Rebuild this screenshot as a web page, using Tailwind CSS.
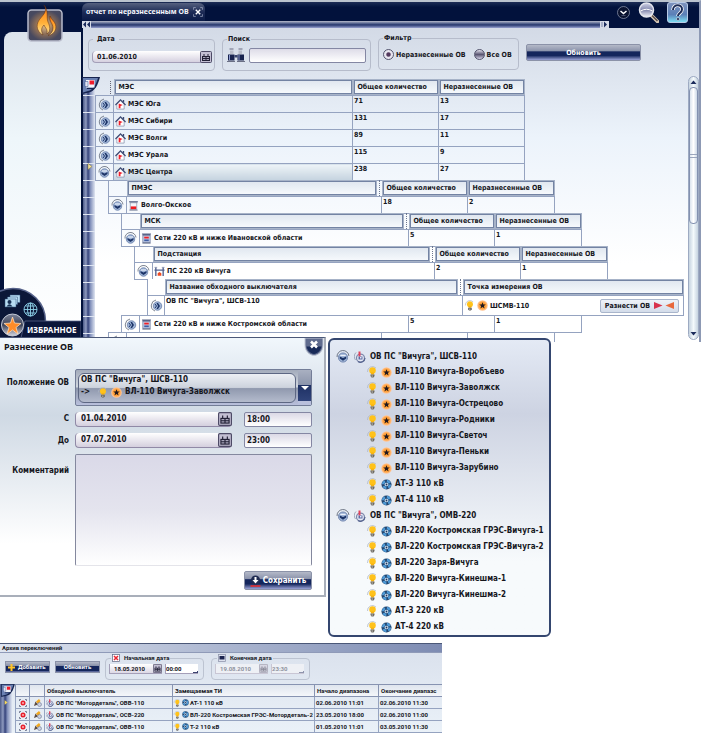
<!DOCTYPE html>
<html lang="ru">
<head>
<meta charset="utf-8">
<meta name="viewport" content="width=device-width, initial-scale=1">
<title>Отчет по неразнесенным ОВ</title>
<script src="https://cdn.jsdelivr.net/npm/@tailwindcss/browser@4"></script>
</head>
<body class="bg-white font-['DejaVu_Sans_Condensed','Noto_Sans',sans-serif] font-bold text-[8px] leading-[10px] text-[#15161c]">

<svg class="absolute size-0" aria-hidden="true">
  <defs>
    <linearGradient id="gFlame" x1="0" y1="0" x2="0" y2="1"><stop offset="0" stop-color="#ff7a10"/><stop offset=".6" stop-color="#ffb13a"/><stop offset="1" stop-color="#ffe9a0"/></linearGradient>
    <radialGradient id="gTile"><stop offset="0" stop-color="#e8c48c"/><stop offset=".55" stop-color="#8d6e57"/><stop offset="1" stop-color="#47495f"/></radialGradient>
    <radialGradient id="gOrange"><stop offset="0" stop-color="#ff9a1c"/><stop offset=".6" stop-color="#ffa13c"/><stop offset="1" stop-color="#ffc9a0"/></radialGradient>
    <linearGradient id="gBall" x1="0" y1="0" x2="0" y2="1"><stop offset="0" stop-color="#7d8398"/><stop offset=".5" stop-color="#3b4157"/><stop offset="1" stop-color="#d5d8e2"/></linearGradient>
    <linearGradient id="gHelp" x1="0" y1="0" x2="0" y2="1"><stop offset="0" stop-color="#7f93bd"/><stop offset=".6" stop-color="#5b80b8"/><stop offset="1" stop-color="#7fe4f6"/></linearGradient>
    <linearGradient id="gLens" x1="0" y1="0" x2="0" y2="1"><stop offset="0" stop-color="#cfd2e6"/><stop offset=".5" stop-color="#8287ad"/><stop offset="1" stop-color="#f3f4fb"/></linearGradient>
  </defs>
  <symbol id="open" viewBox="0 0 26 26"><path d="M2 13A11 11 0 0 1 24 11" fill="none" stroke="#5c6475" stroke-width="1.6"/><circle cx="13" cy="14" r="8.5" fill="#9fb4d6" stroke="#6279a5" stroke-width="1.5"/><path d="M7 12l6 3 6-3v4l-6 4-6-4z" fill="#1c3468"/><path d="M8 10h10" stroke="#f2f6fd" stroke-width="2"/></symbol>
  <symbol id="shut" viewBox="0 0 26 26"><path d="M12 2A11.5 11.5 0 0 0 10 24" fill="none" stroke="#5c6475" stroke-width="1.6"/><circle cx="15" cy="14" r="8.5" fill="#9fb4d6" stroke="#6279a5" stroke-width="1.5"/><path d="M13 8h3l4 6-4 6h-3l3-6z" fill="#1c3468"/><path d="M10 10l3 4-3 4" fill="none" stroke="#1c3468" stroke-width="2"/></symbol>
  <symbol id="house" viewBox="0 0 24 24"><path d="M4 11v11h16V11l-8-7z" fill="#fff" stroke="#7f8aa8" stroke-width="1.5"/><path d="M1 13L12 2l11 11" fill="none" stroke="#3c4a73" stroke-width="2.6"/><path d="M17 2h3v6l-3-3z" fill="#3c4a73"/><path d="M8 10l9 3-5 2v5H8z" fill="#f0202c"/></symbol>
  <symbol id="pmes" viewBox="0 0 24 24"><path d="M2 2h20l-2 5H4z" fill="#77809c"/><path d="M5 6h14v15H5z" fill="#f4f5fa" stroke="#8b93ab" stroke-width="1.5"/><path d="M6 14h12v6H6z" fill="#f01c20"/><path d="M3 22h18" stroke="#6f7893" stroke-width="2"/></symbol>
  <symbol id="msk" viewBox="0 0 24 24"><path d="M2 1h20l-2 5H4z" fill="#5a6488"/><path d="M4 5h16v16H4z" fill="#c8d2ea" stroke="#5e6b92" stroke-width="1.5"/><path d="M7 8h10v4H7z" fill="#ee2028"/><path d="M7 14h10v4H7z" fill="#3e5ea6"/><path d="M3 22h18" stroke="#5e6883" stroke-width="2"/></symbol>
  <symbol id="sub" viewBox="0 0 24 24"><path d="M4 2v20M20 2v20M1 9h22" fill="none" stroke="#52618f" stroke-width="3"/><path d="M8 21v-5l4-3 4 3v5z" fill="#f04a20"/><path d="M1 3h6M17 3h6" stroke="#9aa3bb" stroke-width="2"/></symbol>
  <symbol id="bulb" viewBox="0 0 24 24"><path d="M3 12A10 10 0 0 1 20 4" fill="none" stroke="#aeb6c4" stroke-width="1.5"/><circle cx="13" cy="9" r="6.5" fill="#ffc21a"/><path d="M10 13h6v4h-6z" fill="#f7b212"/><path d="M9 17h8v3l-2 3h-4l-2-3z" fill="#6d6a63"/><path d="M11 20h3" stroke="#e8e8e8" stroke-width="1.4"/></symbol>
  <symbol id="star" viewBox="0 0 24 24"><circle cx="12" cy="12" r="11.500" fill="url(#gOrange)"/><path d="M12 5l2 5h5l-4 3.200 1.600 5.300L12 15.300 7.400 18.500 9 13.200 5 10h5z" fill="#201820"/></symbol>
  <symbol id="at" viewBox="0 0 24 24"><circle cx="12" cy="12" r="11" fill="#23466f"/><circle cx="12" cy="12" r="7.500" fill="none" stroke="#4f9ad6" stroke-width="5.500" stroke-dasharray="7.500 4.280"/><circle cx="12" cy="12" r="4" fill="#dfeaf6"/><circle cx="12" cy="12" r="2" fill="#173560"/></symbol>
  <symbol id="breaker" viewBox="0 0 24 24"><path d="M4 3a11 11 0 0 0-1 15" fill="none" stroke="#8a91a8" stroke-width="1.500"/><circle cx="13" cy="14" r="8" fill="#e7ebf6" stroke="#7f89ab" stroke-width="2.500"/><path d="M8 21a9 9 0 0 0 14-7" stroke="#56648f" stroke-width="2.500" fill="none"/><path d="M9 1h4v10H9z" fill="#e2405a"/><path d="M9 11h8v6H9z" fill="#5c6ba4"/><path d="M12 12h3v3h-3z" fill="#e7ebf6"/></symbol>
  <symbol id="cal" viewBox="0 0 24 24"><rect x="1" y="1" width="22" height="22" rx="2" fill="#c3bfd3" stroke="#4d4a66" stroke-width="2"/><path d="M4 10h16v10H4z" fill="#222036"/><path d="M8 6v5M16 6v5" stroke="#222036" stroke-width="2"/><path d="M6 12h5v2H6zM13 12h5v2h-5zM6 16h5v2H6zM13 16h5v2h-5z" fill="#a9a6bc"/></symbol>
  <symbol id="corner" viewBox="0 0 36 34"><path d="M0 0h36C32 16 26 28 14 31L0 34z" fill="#16244f"/><path d="M2 2h30C28 16 22 26 12 28L2 31z" fill="#6a80b2"/><path d="M8 6h17v15H8z" fill="#f4f5fb"/><path d="M15 7h9v8h-9z" fill="#ee1c2c"/><path d="M6 9h6v10H6z" fill="#dfe4f4" stroke="#39508f"/><path d="M10 23h12" stroke="#16244f" stroke-width="2"/></symbol>
</svg>

<!-- Report window -->
<section class="relative flex h-[342px] flex-col overflow-hidden border-r-2 border-t-2 border-[#8d99b4] border-t-[#bac3ce] bg-[#02123c] text-[7px]" aria-label="Отчет">
  <header class="flex h-[26px] shrink-0 items-start bg-linear-to-b from-[#1c2c55] via-[#02123c] via-20% to-[#02123c]">
    <div class="min-w-0 flex-1 pl-[82px] pt-px">
      <div class="flex h-[18px] w-[123px] items-center gap-1 rounded-t-md bg-linear-to-b from-[#56617f] via-[#1d2b56] to-[#0a1a46] pl-1 text-[#f4f6fb]">
        <span class="font-['Noto_Sans',sans-serif] whitespace-nowrap">отчет по неразнесенным ОВ</span>
        <button aria-label="Закрыть вкладку" class="size-[10px] shrink-0"><svg class="size-[10px]" viewBox="0 0 18 18" fill="none" stroke="#fff"><path d="M5 5l8 8M13 5l-8 8" stroke-width="2.500"/><path d="M1 5V1h4M13 1h4v4M17 13v4h-4M5 17H1v-4" stroke="#c3cbe0"/></svg></button>
      </div>
      <div class="flex h-[7px] items-stretch justify-between bg-linear-to-b from-[#b9bccb] via-[#26366c] via-55% to-[#9aa2cf]">
        <button aria-label="Назад" class="w-[9px] bg-[#d5dae6]"><svg class="h-[7px] w-[9px]" viewBox="0 0 18 14"><path d="M8 1v12L2 7zM16 1v12l-6-6z" fill="#1a2a5c"/></svg></button>
        <button aria-label="Вперед" class="w-[9px] bg-[#d5dae6]"><svg class="h-[7px] w-[9px]" viewBox="0 0 18 14"><path d="M8 1v12l6-6z" fill="#1a2a5c"/><path d="M4 2v10" stroke="#7a86ab" stroke-width="2"/></svg></button>
      </div>
    </div>
    <div class="flex shrink-0 items-center gap-2 pl-2 pr-[11px]">
      <button aria-label="Меню" class="size-[13px]"><svg class="size-[13px]" viewBox="0 0 26 26"><circle cx="13" cy="13" r="12" fill="#0a1330" stroke="#8f97ae" stroke-width="1.500"/><path d="M7 10l6 5 6-5" fill="none" stroke="#fff" stroke-width="3"/><path d="M9 19h8" stroke="#59637f" stroke-width="1.500"/></svg></button>
      <button aria-label="Найти" class="size-[21px]"><svg class="size-[21px]" viewBox="0 0 42 42"><path d="M26 26l13 13" stroke="#d8c9b6" stroke-width="7" stroke-linecap="round"/><path d="M28 27l11 11" stroke="#574c4a" stroke-width="3"/><circle cx="17" cy="16" r="14" fill="url(#gLens)" stroke="#e4e6ef" stroke-width="3"/><path d="M5 18q12-7 24 0" fill="none" stroke="#fff" stroke-width="2"/></svg></button>
      <button aria-label="Справка" class="size-[21px]"><svg class="size-[21px]" viewBox="0 0 42 42"><rect x="1" y="1" width="40" height="40" rx="5" fill="url(#gHelp)" stroke="#b9cbe6" stroke-width="2"/><path d="M12 16c0-13 19-12 18-1 0 7-8 7-8 13" fill="none" stroke="#fff" stroke-width="7"/><path d="M12 16c0-13 19-12 18-1 0 7-8 7-8 13" fill="none" stroke="#1c2c58" stroke-width="4"/><circle cx="22" cy="34" r="3" fill="#1c2c58" stroke="#fff"/></svg></button>
    </div>
  </header>

  <div class="flex min-h-0 flex-1">
    <!-- Side panel -->
    <aside class="flex w-[83px] shrink-0 flex-col pb-[5px] pl-1 pr-[2px] pt-1">
      <div class="flex-1 rounded-tl-lg bg-linear-to-b from-[#dce3ec] via-[#eef6fa] via-35% to-white"></div>
    </aside>

    <!-- Content -->
    <main class="flex min-w-0 flex-1 flex-col bg-linear-to-b from-[#d3dae6] via-[#ecf3fb] via-35% to-white to-75%">
      <form class="flex h-[51px] shrink-0 items-start gap-[7px] pl-[5px] pt-[6px]">
        <fieldset class="h-[37px] w-[127px] rounded border border-[#b6bccb] pl-[3px]">
          <legend class="ml-px px-1"><label for="date">Дата</label></legend>
          <div class="mt-[7px] flex h-3 w-[120px] items-center rounded-sm border-b border-l border-[#a49fb8] bg-linear-to-b from-white to-[#d6d1e0]">
            <input id="date" value="01.06.2010" class="w-0 flex-1 pl-1">
            <button type="button" aria-label="Календарь" class="size-3"><svg class="size-3"><use href="#cal"/></svg></button>
          </div>
        </fieldset>
        <fieldset class="h-[37px] w-[149px] rounded border border-[#b6bccb] px-[4px]">
          <legend class="px-px"><label for="find">Поиск</label></legend>
          <div class="mt-1 flex items-center gap-1">
            <svg class="h-[15px] w-[18px] shrink-0" viewBox="0 0 36 30"><path d="M5 2h8M23 2h8" stroke="#8e93a5" stroke-width="3"/><path d="M6 5h7v7H6zM23 5h7v7h-7z" fill="#b9bdca"/><path d="M2 13h13v12H2zM21 13h13v12H21z" fill="#18234f"/><path d="M5 14v10M24 14v10" stroke="#8d9cd0" stroke-width="2"/><path d="M15 14h6v5h-6z" fill="#39456f"/><path d="M0 27h16M20 27h16" stroke="#6b7085" stroke-width="2"/></svg>
            <input id="find" class="h-[15px] w-0 flex-1 rounded-xs border border-[#8487a3] bg-linear-to-b from-[#dedce8] to-white px-1">
          </div>
        </fieldset>
        <fieldset class="-mt-px h-[37px] w-[141px] rounded border border-[#b6bccb] pl-1">
          <legend class="px-px">Фильтр</legend>
          <div class="mt-[6px] flex items-center gap-2 whitespace-nowrap">
            <label class="flex items-center gap-[2px]"><input type="radio" name="f" checked class="size-[11px] appearance-none rounded-full border border-[#54556e] bg-[radial-gradient(circle,#53395e_25%,#e8e6f0_45%)]">Неразнесенные ОВ</label>
            <label class="flex items-center gap-[2px]"><input type="radio" name="f" class="size-[11px] appearance-none rounded-full border border-[#54556e] bg-linear-to-b from-[#e6e4f0] via-[#5a5672] to-[#d8d5ea]">Все ОВ</label>
          </div>
        </fieldset>
        <button type="button" class="mt-[10px] h-[17px] w-[115px] rounded-xs border border-[#8b92a8] bg-[linear-gradient(180deg,#b4b9c8_0%,#8b93ab_40%,#14265c_45%,#14265c_70%,#9ba3d6_100%)] text-white">Обновить</button>
      </form>

      <div class="flex min-h-0 flex-1">
        <div class="relative w-3 shrink-0 bg-[linear-gradient(90deg,#4c5a88_0%,#8f9bc0_25%,#34427a_42%,#8391bb_62%,#dfe5f1_100%)]">
          <div class="h-full bg-[repeating-linear-gradient(180deg,transparent_0_16px,#dfe5f1_16px_17px)]"></div>
          <svg class="absolute -left-px -top-[2px] z-10 h-[17px] w-[18px]"><use href="#corner"/></svg>
          <svg class="absolute left-1 top-[84px] size-[7px]" viewBox="0 0 14 14"><path d="M2 1l8 6-8 6z" fill="#f4e39a" stroke="#8a7a3a"/></svg>
        </div>
        <div id="grid" class="min-w-0 flex-1 overflow-hidden"></div>
        <div class="mb-[2px] -mt-[3px] flex w-[11px] shrink-0 flex-col items-center rounded-full border border-[#9daac2] bg-linear-to-r from-[#c6d3e0] via-[#f4fafc] to-[#c6d3e0]" role="scrollbar" aria-controls="grid" aria-valuenow="0">
          <svg class="h-[10px] w-[7px] shrink-0" viewBox="0 0 14 20"><path d="M1 14l6-7 6 7z" fill="#1c2c5c"/></svg>
          <div class="flex h-[137px] w-[9px] shrink-0 flex-col justify-center rounded-sm border border-[#8391b0] bg-linear-to-r from-[#dbe4ee] via-white to-[#ccd8e6]"><div class="h-1 border-y border-[#9aa6bd]"></div></div>
          <svg class="mt-auto h-[10px] w-[7px] shrink-0" viewBox="0 0 14 20"><path d="M1 6l6 7 6-7z" fill="#1c2c5c"/></svg>
        </div>
      </div>
    </main>
  </div>

  <button aria-label="Главное меню" class="absolute left-[27px] top-[2px] h-[38px] w-[36px]"><svg class="h-[38px] w-[36px]" viewBox="0 0 72 76"><rect x="2" y="12" width="68" height="62" rx="7" fill="url(#gTile)" stroke="#b9bccb" stroke-width="3"/><path d="M34 2c10 14-6 22-12 34-5 12 2 22 10 26-4-8-4-14 2-20 2 6 8 8 6 18 8-6 6-16 2-24-4-10 2-22-8-34z" fill="url(#gFlame)" stroke="#5a2b10"/><path d="M46 24c-2 12 6 14 6 24 0 8-5 12-10 15 12-2 18-12 15-22-2-7-8-9-11-17z" fill="url(#gFlame)" stroke="#5a2b10"/></svg></button>

  <div class="absolute bottom-0 left-0 h-[56px] w-[81px] overflow-hidden">
    <svg class="absolute inset-0 h-[56px] w-[81px]" viewBox="0 0 162 112"><circle cx="26" cy="70" r="65" fill="#0c1738" stroke="#56628a" stroke-width="3"/><path d="M50 70h112v42H40z" fill="#0a163a" stroke="#59658c" stroke-width="1.500"/><g fill="#b8dcf2" stroke="#33547e"><path d="M20 18h20v15H20z"/><path d="M15 22h20v15H15z"/><path d="M10 26h22v16H10z"/></g><circle cx="19" cy="32" r="4" fill="#173055"/><path d="M13 41q6-9 12 0z" fill="#173055"/><g fill="none" stroke="#8fd3ea" stroke-width="1.800"><circle cx="61" cy="47" r="13"/><ellipse cx="61" cy="47" rx="6" ry="13"/><path d="M61 34v26M48 47h26M51 40h20M51 54h20"/></g><circle cx="25" cy="78" r="22" fill="url(#gBall)" stroke="#c4c9d6" stroke-width="2"/><path d="M25 62l4 12 13 1-10 8 4 13-11-8-11 8 4-13-10-8 13-1z" fill="#ff8c28" stroke="#ffe0c0" stroke-width="1.500"/></svg>
    <a href="#favorites" class="absolute bottom-[7px] left-[27px] font-['Noto_Sans',sans-serif] text-[8px] leading-[10px] text-white">ИЗБРАННОЕ</a>
  </div>
</section>

<div class="relative z-20 -mt-[5px] grid grid-cols-[326fr_223fr_148fr] items-start gap-x-[2px]">
  <!-- Assignment dialog -->
  <section role="dialog" aria-labelledby="dlg" class="h-[260px] border-b-2 border-r-2 border-t border-[#a9afba] border-t-[#4b5878] bg-linear-to-b from-[#f1f7fc] via-[#cfd9e4] via-30% to-white to-80%">
    <div class="flex h-[31px] items-start justify-between pl-1">
      <h2 id="dlg" class="pt-[3px] font-['Noto_Sans',sans-serif] text-[9px] leading-[12px]">Разнесение ОВ</h2>
      <button aria-label="Закрыть" class="h-[18px] w-[20px]"><svg class="h-[18px] w-[20px]" viewBox="0 0 40 36"><path d="M2 0h36v14C38 26 30 34 20 35 10 34 2 26 2 14z" fill="#5f6b8e" stroke="#c1c7d5" stroke-width="2"/><path d="M5 17h30c-2 9-8 14-15 15C13 31 7 26 5 17z" fill="#182a58"/><path d="M14 7l12 12M26 7L14 19" stroke="#fff" stroke-width="5"/></svg></button>
    </div>
    <form class="grid grid-cols-[69px_1fr] gap-x-[6px] gap-y-[6px] pr-3">
      <label for="pos" class="pt-[9px] text-right whitespace-nowrap">Положение ОВ</label>
      <button id="pos" type="button" aria-haspopup="listbox" class="flex h-[37px] items-stretch rounded-xs border border-[#737d97] bg-[linear-gradient(180deg,#a3abbb_0%,#d0d6df_48%,#8c96ab_52%,#b9c0dc_100%)] text-left">
        <span class="m-[2px] mt-[3px] flex-1 rounded-md border border-[#5d6783] bg-[linear-gradient(180deg,#eceff4_0%,#cdd3dd_48%,#9099ae_52%,#b4bbcd_100%)] pl-[2px]">
          <span class="block leading-[12px]">ОВ ПС "Вичуга", ШСВ-110</span>
          <span class="flex items-center gap-[3px] leading-[12px]">-&gt; <svg class="ml-1 size-[11px]"><use href="#bulb"/></svg><svg class="size-[11px]"><use href="#star"/></svg>ВЛ-110 Вичуга-Заволжск</span>
        </span>
        <span class="flex w-[13px] items-center justify-center bg-[linear-gradient(180deg,#a9b0c1_0%,#8c95ac_42%,#1f3164_44%,#30447a_88%,#b9c0dc_90%)]"><svg class="h-1 w-2" viewBox="0 0 16 8"><path d="M0 0h16l-8 8z" fill="#fff"/></svg></span>
      </button>
      <label for="from" class="pt-[2px] text-right">С</label>
      <div class="flex h-[15px] gap-3">
        <div class="flex flex-1 items-center rounded-sm border-b border-l border-[#9089a6] bg-linear-to-b from-white to-[#d4cfde]">
          <input id="from" value="01.04.2010" class="w-0 flex-1 pl-[5px]">
          <button type="button" aria-label="Календарь" class="size-[14px]"><svg class="size-[14px]"><use href="#cal"/></svg></button>
        </div>
        <input aria-label="Время начала" value="18:00" class="w-[68px] rounded-xs border border-[#8487a3] bg-linear-to-b from-[#dbd9e6] to-white pl-[2px]">
      </div>
      <label for="to" class="pt-[3px] text-right">До</label>
      <div class="flex h-[15px] gap-3">
        <div class="flex flex-1 items-center rounded-sm border-b border-l border-[#9089a6] bg-linear-to-b from-white to-[#d4cfde]">
          <input id="to" value="07.07.2010" class="w-0 flex-1 pl-[5px]">
          <button type="button" aria-label="Календарь" class="size-[14px]"><svg class="size-[14px]"><use href="#cal"/></svg></button>
        </div>
        <input aria-label="Время окончания" value="23:00" class="w-[68px] rounded-xs border border-[#8487a3] bg-linear-to-b from-[#dbd9e6] to-white pl-[2px]">
      </div>
      <label for="com" class="pt-3 text-right">Комментарий</label>
      <textarea id="com" class="h-[112px] w-full resize-none rounded-xs border border-[#84889e] border-b-[#e4e4ea] bg-linear-to-b from-[#dad9e8] via-[#e4e4ee] to-white p-1"></textarea>
      <div class="col-span-2 flex justify-end">
        <button type="button" class="-mt-px flex h-[19px] w-[68px] items-center justify-center gap-[2px] rounded-xs border border-[#8b92a8] bg-[linear-gradient(180deg,#b4b9c8_0%,#8b93ab_40%,#14265c_45%,#14265c_70%,#9ba3d6_100%)] text-white"><svg class="h-3 w-[11px]" viewBox="0 0 22 24"><circle cx="11" cy="10" r="9" fill="#202c52"/><path d="M9 4h4v6h4l-6 7-6-7h4z" fill="#fff"/><path d="M1 22h20" stroke="#ee2a2a" stroke-width="3"/></svg>Сохранить</button>
      </div>
    </form>
  </section>

  <!-- Breaker tree -->
  <section aria-label="Обходные выключатели" class="mt-px rounded-md border-2 border-[#34466f] bg-linear-to-b from-[#e4eaf5] via-[#cdd3e2] via-25% to-[#f7fafc] to-75% pl-[6px] pt-[9px]">
    <ul id="tree"></ul>
  </section>
</div>

<!-- Switching archive -->
<section class="mt-[6px] w-[63%] overflow-hidden bg-linear-to-b from-[#d9e0ec] to-[#eaf1f8] font-['Roboto','Noto_Sans',sans-serif] text-[6px] leading-[8px]" aria-label="Архив переключений">
  <h2 class="flex h-[10px] items-center border-b border-[#8f9ab8] border-t border-t-[#4b5878] bg-linear-to-r from-[#dfe5f0] to-[#7d8bb2] pl-[2px]">Архив переключений</h2>
  <form class="flex h-[31px] items-start gap-[5px] pl-[5px] pt-px">
    <button type="button" class="mt-[7px] flex h-3 w-[45px] items-center gap-[3px] border border-[#8b92a8] bg-[linear-gradient(180deg,#b4b9c8_0%,#8b93ab_35%,#14265c_45%,#14265c_85%,#7b86b8_100%)] pl-[2px] text-white"><svg class="size-[7px]" viewBox="0 0 14 14"><path d="M5 0h4v5h5v4H9v5H5V9H0V5h5z" fill="#ffc42a"/></svg>Добавить</button>
    <button type="button" class="mt-[7px] h-3 w-[45px] border border-[#8b92a8] bg-[linear-gradient(180deg,#b4b9c8_0%,#8b93ab_35%,#14265c_45%,#14265c_85%,#7b86b8_100%)] text-center text-white">Обновить</button>
    <fieldset class="h-[26px] w-[99px] rounded border border-[#bcc3d1] px-[3px]">
      <legend class="ml-[2px] flex items-center gap-1 px-px"><svg class="size-[8px]" viewBox="0 0 16 16"><rect x="1" y="1" width="14" height="14" fill="#fff" stroke="#656b86" stroke-width="1.500"/><path d="M4 4l8 8M12 4l-8 8" stroke="#ea2430" stroke-width="3"/></svg><label for="a1">Начальная дата</label></legend>
      <div class="mt-[2px] flex h-[10px] gap-[3px]">
        <div class="flex w-[53px] items-center border-b border-l border-[#a49fb8] bg-linear-to-b from-white to-[#dcd8e5]"><input id="a1" value="18.05.2010" class="w-0 flex-1 pl-1"><button type="button" aria-label="Календарь" class="size-[9px]"><svg class="size-[9px]"><use href="#cal"/></svg></button></div>
        <select aria-label="Время" class="w-[33px] appearance-none border-b border-l border-[#a49fb8] bg-linear-to-br from-white from-90% to-[#3c4370] to-90%"><option>00:00</option></select>
      </div>
    </fieldset>
    <fieldset disabled class="ml-[2px] h-[26px] w-[99px] rounded border border-[#bcc3d1] px-[3px]">
      <legend class="ml-[2px] flex items-center gap-1 px-px"><svg class="size-[8px]" viewBox="0 0 16 16"><rect x="1" y="1" width="14" height="14" fill="#dde1ee" stroke="#8d93aa" stroke-width="1.500"/><path d="M3 4h10v7H3z" fill="#1c2450"/></svg><label for="a2">Конечная дата</label></legend>
      <div class="mt-[2px] flex h-[10px] gap-[3px] text-[#8f93a0]">
        <div class="flex w-[53px] items-center border-b border-l border-[#c9c6d4] bg-[#eef0f5]"><input id="a2" value="19.08.2010" class="w-0 flex-1 pl-1"><button type="button" aria-label="Календарь" class="size-[9px] opacity-50"><svg class="size-[9px]"><use href="#cal"/></svg></button></div>
        <select aria-label="Время" class="w-[33px] appearance-none border-b border-l border-[#c9c6d4] bg-linear-to-br from-[#eef0f5] from-90% to-[#8f95ad] to-90%"><option>23:30</option></select>
      </div>
    </fieldset>
  </form>
  <div class="flex">
    <div class="relative w-[12px] shrink-0 bg-[linear-gradient(90deg,#4c5a88_0%,#8f9bc0_25%,#34427a_42%,#8391bb_62%,#dfe5f1_100%)]">
      <svg class="absolute left-0 top-0 z-10 h-[13px] w-4"><use href="#corner"/></svg>
      <svg class="absolute left-1 top-4 size-[5px]" viewBox="0 0 14 14"><path d="M2 1l8 6-8 6z" fill="#f4d75a"/></svg>
    </div>
    <table class="ml-[3px] w-full min-w-0 flex-1 table-fixed border-collapse text-left whitespace-nowrap">
      <colgroup><col class="w-[14px]"><col class="w-[15px]"><col class="w-[128px]"><col class="w-[142px]"><col class="w-[64px]"><col></colgroup>
      <thead><tr class="h-[12px] bg-linear-to-b from-[#dfe5ee] to-[#f6f8fb]">
        <th class="border border-[#8793b1]"></th><th class="border border-[#8793b1]"></th>
        <th class="border border-[#8793b1] px-[2px]">Обходной выключатель</th><th class="border border-[#8793b1] px-[2px]">Замещаемая ТИ</th><th class="border border-[#8793b1] px-[2px]">Начало диапазона</th><th class="border border-r-0 border-[#8793b1] pl-[2px]">Окончание диапазс</th>
      </tr></thead>
      <tbody id="archive"></tbody>
    </table>
  </div>
</section>

<script>
const icon = (id, cls) => `<svg class="${cls} shrink-0"><use href="#${id}"/></svg>`;

// Header boxes of the nested grid
const box = 'border border-[#a7b3c8] bg-linear-to-b from-[#dfe6ef] to-[#f7fafd] shadow-[inset_0_0_0_1px_#7383a3]';
const head = t => `<th class="p-0"><div class="flex h-4 items-center pl-1 text-left ${box}">${t}</div></th>`;
const grip = '<span class="ml-[2px] h-4 w-[3px] shrink-0 border-l border-dotted border-[#6d7890]"></span>';
const nameHead = (t, nested) => `<th class="p-0"><div class="flex h-4 text-left"><span class="flex flex-1 items-center pl-1 ${box}">${t}</span>${nested ? grip : ''}</div></th>`;
const counts = head('Общее количество') + head('Неразнесенные ОВ');
const cell = 'border border-[#95a3c0] p-0';
const row = (exp, ic, name, a, b, current) => `<tr class="h-[17px]">
  <td class="${cell} text-center">${icon(exp, 'inline-block size-[13px]')}</td>
  <td class="${cell} ${current ? 'bg-linear-to-b from-[#eef4f8] to-[#c5d3df]' : ''}"><span class="flex items-center gap-[2px] pl-px">${icon(ic, 'size-[11px]')}${name}</span></td>
  <td class="${cell} pl-px align-top">${a}</td><td class="${cell} pl-px align-top">${b}</td></tr>`;
const cols = [
  '<col class="w-[18px]"><col class="w-[239px]"><col class="w-[86px]"><col class="w-[86px]">',
  '<col class="w-[18px]"><col class="w-[255px]"><col class="w-[86px]"><col class="w-[87px]">',
  '<col class="w-[18px]"><col class="w-[269px]"><col class="w-[86px]"><col class="w-[87px]">',
  '<col class="w-[18px]"><col class="w-[282px]"><col class="w-[86px]"><col class="w-[87px]">',
];
const widths = ['w-[429px]', '-mt-px w-[446px]', '-mt-px w-[460px]', '-mt-px w-[473px]'];
const table = (lvl, title, rows) => `<table class="${widths[lvl]} table-fixed border-collapse whitespace-nowrap"><colgroup>${cols[lvl]}</colgroup>
  ${title ? `<thead><tr><td class="p-0 ${lvl ? 'border-l border-[#95a3c0]' : ''}">${lvl ? '' : '<span class="ml-auto mr-[3px] block h-[13px] w-px border-l border-dotted border-[#667]"></span>'}</td>${nameHead(title, lvl > 0)}${counts}</tr></thead>` : ''}<tbody>${rows}</tbody></table>`;
const nest = inner => `<div class="pl-[13px]">${inner}</div>`;

document.getElementById('grid').innerHTML =
  table(0, 'МЭС', row('shut','house','МЭС Юга',71,13) + row('shut','house','МЭС Сибири',131,17) + row('shut','house','МЭС Волги',89,11) + row('shut','house','МЭС Урала',115,9) + row('open','house','МЭС Центра',238,27,true)) +
  nest(table(1, 'ПМЭС', row('open','pmes','Волго-Окское',18,2)) +
    nest(table(2, 'МСК', row('open','msk','Сети 220 кВ и ниже Ивановской области',5,1)) +
      nest(table(3, 'Подстанция', row('open','sub','ПС 220 кВ Вичуга',2,1)) +
        nest(`<table class="-mt-px w-[536px] table-fixed border-collapse bg-white whitespace-nowrap"><colgroup><col class="w-[17px]"><col class="w-[298px]"><col class="w-[221px]"></colgroup>
          <thead><tr><td class="border-l border-[#95a3c0] p-0"></td>${nameHead('Название обходного выключателя', true)}${head('Точка измерения ОВ')}</tr></thead>
          <tbody><tr class="h-[20px]"><td class="${cell} text-center">${icon('shut','inline-block size-[13px]')}</td><td class="${cell} pl-px align-top">ОВ ПС "Вичуга", ШСВ-110</td>
          <td class="${cell}"><div class="flex items-center gap-[2px] pl-px pr-1">${icon('bulb','size-[11px]')}${icon('star','size-[11px]')}<span class="flex-1">ШСМВ-110</span><button class="flex h-[14px] w-[79px] items-center justify-center gap-1 rounded-xs border border-[#a9b5cb] bg-linear-to-b from-[#eef2f8] to-[#d3dcea]">Разнести ОВ<svg class="h-[7px] w-[20px]" viewBox="0 0 40 14"><path d="M0 0l17 7-17 7z" fill="#d8324c"/><path d="M40 0L23 7l17 7z" fill="#e8683c"/></svg></button></div></td></tr></tbody></table>`)) +
      table(2, '', row('shut','msk','Сети 220 кВ и ниже Костромской области',5,1))) +
    table(1, '', row('shut','pmes','','','')));

// Breaker tree
const branch = (name, items) => `<li><div class="flex h-[15px] items-center gap-1 whitespace-nowrap">${icon('open','size-[14px]')}${icon('breaker','size-[12px]')}${name}</div>
  <ul>${items.map(([ic, t]) => `<li class="flex h-4 items-center gap-[3px] pl-[30px] whitespace-nowrap">${icon('bulb','size-[12px]')}${icon(ic,'size-[11px]')}${t}</li>`).join('')}</ul></li>`;
document.getElementById('tree').innerHTML =
  branch('ОВ ПС "Вичуга", ШСВ-110', [['star','ВЛ-110 Вичуга-Воробъево'],['star','ВЛ-110 Вичуга-Заволжск'],['star','ВЛ-110 Вичуга-Острецово'],['star','ВЛ-110 Вичуга-Родники'],['star','ВЛ-110 Вичуга-Светоч'],['star','ВЛ-110 Вичуга-Пеньки'],['star','ВЛ-110 Вичуга-Зарубино'],['at','АТ-3 110 кВ'],['at','АТ-4 110 кВ']]) +
  branch('ОВ ПС "Вичуга", ОМВ-220', [['at','ВЛ-220 Костромская ГРЭС-Вичуга-1'],['at','ВЛ-220 Костромская ГРЭС-Вичуга-2'],['at','ВЛ-220 Заря-Вичуга'],['at','ВЛ-220 Вичуга-Кинешма-1'],['at','ВЛ-220 Вичуга-Кинешма-2'],['at','АТ-3 220 кВ'],['at','АТ-4 220 кВ']]);

// Archive rows
const del = '<svg class="mx-auto size-[8px]" viewBox="0 0 16 16"><path d="M1 4V1h3M12 1h3v3M15 12v3h-3M4 15H1v-3" fill="none" stroke="#555c78" stroke-width="1.500"/><circle cx="8" cy="8" r="5" fill="#e8202c"/><path d="M6 6l4 4M10 6l-4 4" stroke="#fff"/></svg>';
const edit = '<svg class="mx-auto size-[9px]" viewBox="0 0 18 18"><path d="M2 16l3-9 5 6z" fill="#5b4b42"/><path d="M6 7l6-5 3 4-5 6z" fill="#f2a81e"/><circle cx="13" cy="13" r="4" fill="#c9cfdf" stroke="#5d6684"/></svg>';
document.getElementById('archive').innerHTML = [
  ['ОВВ-110','АТ-1 110 кВ','02.06.2010 11:01','02.06.2010 11:30'],
  ['ОСВ-220','ВЛ-220 Костромская ГРЭС-Мотордеталь-2','23.05.2010 18:00','02.06.2010 11:00'],
  ['ОВВ-110','Т-2 110 кВ','01.05.2010 11:01','03.05.2010 11:30'],
].map(([b, t, s, e]) => `<tr class="h-[12px]"><td class="${cell}">${del}</td><td class="${cell}">${edit}</td>
  <td class="${cell}"><span class="flex items-center gap-[2px] pl-px">${icon('breaker','size-[8px]')}ОВ ПС "Мотордеталь", ${b}</span></td>
  <td class="${cell}"><span class="flex items-center gap-px">${icon('bulb','size-[8px]')}${icon('at','size-[7px]')}${t}</span></td>
  <td class="${cell} pl-px">${s}</td><td class="${cell} border-r-0 pl-px">${e}</td></tr>`).join('');
</script>
</body>
</html>
